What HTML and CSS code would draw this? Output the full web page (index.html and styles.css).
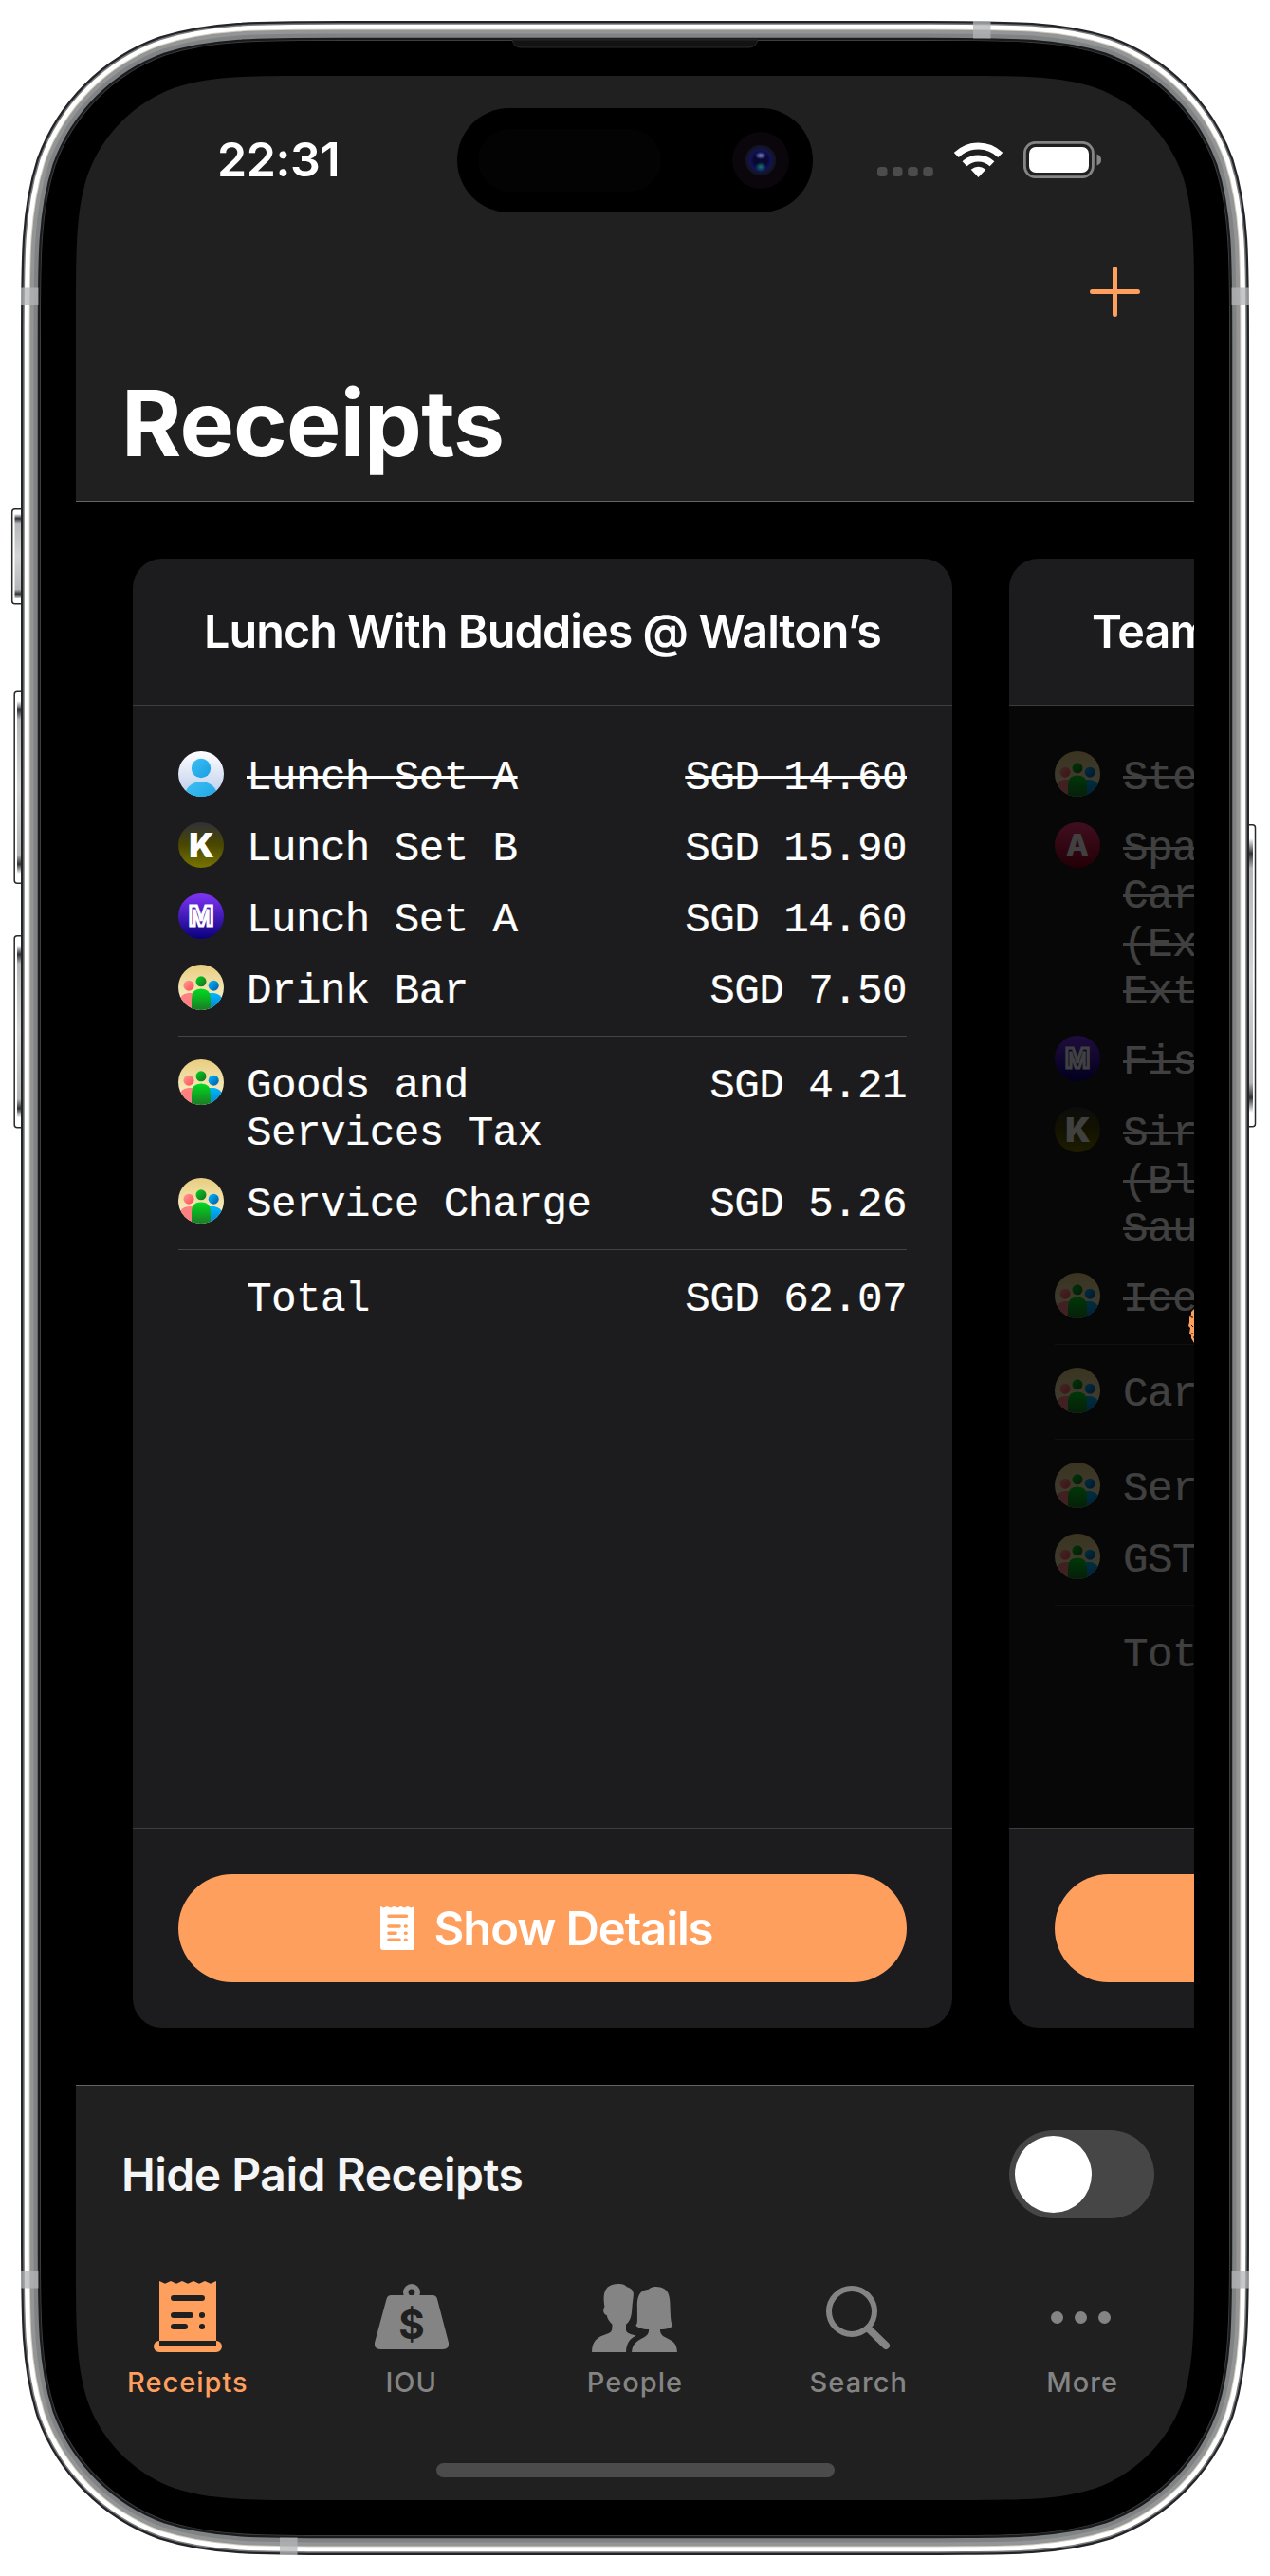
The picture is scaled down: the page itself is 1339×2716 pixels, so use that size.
FILE: index.html
```html
<!DOCTYPE html>
<html lang="en">
<head>
<meta charset="utf-8">
<title>Receipts</title>
<link rel="stylesheet" href="styles.css">
</head>
<body>
<svg class="defs" width="0" height="0" aria-hidden="true">
  <defs>
    <linearGradient id="g-white" x2="0" y2="1"><stop stop-color="#fff"/><stop offset="1" stop-color="#b9cbeb"/></linearGradient>
    <linearGradient id="g-sky" x2="1" y2="1"><stop stop-color="#3cc0f2"/><stop offset="1" stop-color="#189ee4"/></linearGradient>
    <linearGradient id="g-sand" x2="0" y2="1"><stop stop-color="#e8cd80"/><stop offset="1" stop-color="#fdf8d6"/></linearGradient>
    <linearGradient id="g-pink" x2="1" y2="1"><stop stop-color="#ff9c9c"/><stop offset="1" stop-color="#ff4d4d"/></linearGradient>
    <linearGradient id="g-green" x2="1" y2="1"><stop stop-color="#00d420"/><stop offset="1" stop-color="#1b6a20"/></linearGradient>
    <linearGradient id="g-green-body" x2="0" y2="1"><stop stop-color="#00dc20"/><stop offset="1" stop-color="#1c7a26"/></linearGradient>
    <linearGradient id="g-blue" x2="1" y2="1"><stop stop-color="#00bcff"/><stop offset="1" stop-color="#0058a8"/></linearGradient>
    <linearGradient id="g-blue-body" x2="0" y2="1"><stop stop-color="#00b8fc"/><stop offset="1" stop-color="#0080d0"/></linearGradient>
    <clipPath id="round"><circle cx="24" cy="24" r="24"/></clipPath>
  </defs>
  <symbol id="person" viewBox="0 0 48 48">
    <g clip-path="url(#round)"><rect width="48" height="48" fill="url(#g-white)"/>
    <circle cx="24" cy="18" r="10.2" fill="url(#g-sky)"/><ellipse cx="24" cy="48" rx="17.5" ry="16" fill="url(#g-sky)"/></g>
  </symbol>
  <symbol id="group" viewBox="0 0 48 48">
    <g clip-path="url(#round)"><rect width="48" height="48" fill="url(#g-sand)"/>
    <circle cx="11" cy="22.200" r="5.500" fill="url(#g-pink)"/><circle cx="37.200" cy="22.200" r="5.500" fill="url(#g-blue)"/><circle cx="24" cy="17.800" r="5.500" fill="url(#g-green)"/>
    <path d="M1 48V40Q2 30 11 30H16V48Z" fill="#ff8080"/><path d="M32 48V30H38Q45 31 47 38V48Z" fill="url(#g-blue-body)"/>
    <path d="M14 48V36Q14 25.600 24 25.600T34 36V48Z" fill="url(#g-green-body)"/></g>
  </symbol>
</svg>

<div class="phone">
  <svg class="frame" viewBox="0 0 1339 2716" aria-hidden="true">
    <defs>
      <linearGradient id="g-key" x2="0" y2="1"><stop stop-color="#fff"/><stop offset=".04" stop-color="#fff"/><stop offset=".09" stop-color="#303236"/><stop offset=".14" stop-color="#b4b6b8"/><stop offset=".5" stop-color="#d4d5d6"/><stop offset=".86" stop-color="#b4b6b8"/><stop offset=".91" stop-color="#303236"/><stop offset=".96" stop-color="#fff"/><stop offset="1" stop-color="#fff"/></linearGradient>
      <path id="body" d="M361 43H978C1069.600 43 1115.400 43 1164.600 58.600C1218.500 78.200 1260.800 120.500 1280.400 174.400C1296 223.600 1296 269.400 1296 361V2355C1296 2446.600 1296 2492.400 1280.400 2541.600C1260.800 2595.500 1218.500 2637.800 1164.600 2657.400C1115.400 2673 1069.600 2673 978 2673H361C269.400 2673 223.600 2673 174.400 2657.400C120.500 2637.800 78.200 2595.500 58.600 2541.600C43 2492.400 43 2446.600 43 2355V361C43 269.400 43 223.600 58.600 174.400C78.200 120.500 120.500 78.200 174.400 58.600C223.600 43 269.400 43 361 43Z"/>
    </defs>
    <g fill="#fff" stroke="#27292c" stroke-width="1.500">
      <rect x="12.700" y="536.700" width="14" height="100" rx="3"/>
      <rect x="15.200" y="729.200" width="14" height="202" rx="3"/>
      <rect x="15.200" y="986.700" width="14" height="202" rx="3"/>
      <rect x="1310" y="869.700" width="13.500" height="318" rx="3"/>
    </g>
    <g fill="url(#g-key)">
      <rect x="15.500" y="538" width="7" height="97"/>
      <rect x="18" y="731" width="5" height="198"/>
      <rect x="18" y="988.500" width="5" height="198"/>
      <rect x="1316" y="871.500" width="5" height="314"/>
    </g>
    <g fill="none">
      <use href="#body" stroke="#222427" stroke-width="42"/>
      <use href="#body" stroke="#77797b" stroke-width="37.500"/>
      <use href="#body" stroke="#fff" stroke-width="34.500"/>
      <use href="#body" stroke="#d8d3c4" stroke-width="25"/>
      <use href="#body" stroke="#939597" stroke-width="23"/>
      <use href="#body" stroke="#808284" stroke-width="15"/>
      <use href="#body" stroke="#1a1b1d" stroke-width="6.500"/>
      <use href="#body" stroke="#3c3e40" stroke-width="2"/>
    </g>
    <use href="#body" fill="#000"/>
    <g fill="#b4b5b7" fill-opacity=".75">
      <rect x="22" y="303.500" width="18.500" height="18.500"/><rect x="1298.500" y="303.500" width="18.500" height="18.500"/>
      <rect x="22" y="2394" width="18.500" height="18.500"/><rect x="1298.500" y="2394" width="18.500" height="18.500"/>
      <rect x="1026" y="22" width="18.500" height="18.500"/><rect x="295" y="2675.500" width="18.500" height="18.500"/>
    </g>
    <path d="M540 42H799Q797 50 790 50H549Q542 50 540 42Z" fill="#131313" stroke="#2a2a2a"/>
  </svg>

  <main class="screen">
    <header class="header">
      <div class="status">
        <span class="time">22:31</span>
        <svg class="signal" viewBox="0 0 59 10"><g fill="#4c4c4c"><rect width="10.500" height="10" rx="3.500"/><rect x="16" width="10.500" height="10" rx="3.500"/><rect x="32.200" width="10.500" height="10" rx="3.500"/><rect x="48.300" width="10.500" height="10" rx="3.500"/></g></svg>
        <svg class="wifi" viewBox="0 0 51 37"><g fill="none" stroke="#fff" stroke-width="7"><path d="M2.300 13.500A33 33 0 0 1 48.700 13.500"/><path d="M11 22.700A21 21 0 0 1 40 22.700"/></g><path d="M25.500 37L17.700 28.800Q25.500 22.500 33.300 28.800Z" fill="#fff"/></svg>
        <svg class="battery" viewBox="0 0 82 39"><rect x="1.400" y="1.400" width="72" height="36.200" rx="11" fill="none" stroke="#858585" stroke-width="2.800"/><rect x="6" y="6" width="63" height="27" rx="7" fill="#fff"/><path d="M77.500 13.500Q82 15 82 19.500T77.500 25.500Z" fill="#858585"/></svg>
      </div>
      <div class="nav">
        <svg class="plus" viewBox="0 0 53 53"><path d="M2.500 26.500H50.500M26.500 2.500V50.500" stroke="#ff9f5e" stroke-width="5" stroke-linecap="round"/></svg>
      </div>
      <h1 class="title">Receipts</h1>
      <div class="island">
        <span class="sensor"></span>
        <span class="camera"></span>
      </div>
    </header>

    <section class="carousel">
      <article class="card">
        <h2 class="card-title card-title-center">Lunch With Buddies @ Walton’s</h2>
        <div class="items">
          <div class="row paid"><svg class="avatar"><use href="#person"/></svg><span class="name"><span>Lunch Set A</span></span><span class="price">SGD 14.60</span></div>
          <div class="row"><span class="avatar letter letter-k">K</span><span class="name">Lunch Set B</span><span class="price">SGD 15.90</span></div>
          <div class="row"><span class="avatar letter letter-m">M</span><span class="name">Lunch Set A</span><span class="price">SGD 14.60</span></div>
          <div class="row"><svg class="avatar"><use href="#group"/></svg><span class="name">Drink Bar</span><span class="price">SGD 7.50</span></div>
          <hr class="rule">
          <div class="row"><svg class="avatar"><use href="#group"/></svg><span class="name">Goods and<br>Services Tax</span><span class="price">SGD 4.21</span></div>
          <div class="row"><svg class="avatar"><use href="#group"/></svg><span class="name">Service Charge</span><span class="price">SGD 5.26</span></div>
          <hr class="rule">
          <div class="row"><span class="avatar"></span><span class="name">Total</span><span class="price">SGD 62.07</span></div>
        </div>
        <footer class="card-footer">
          <button class="details">
            <svg class="details-icon" viewBox="0 0 36 46"><path fill="#fff" fill-rule="evenodd" d="M0 0L3.600 1.500 7.200 0 10.800 1.500 14.400 0 18 1.500 21.600 0 25.200 1.500 28.800 0 32.400 1.500 36 0V43Q36 46 33 46H3Q0 46 0 43Z"/><g stroke="#ff9f5e" stroke-width="3.600" stroke-linecap="round"><path d="M9 10.300H27.500M9 21H20M9 28.300H16M9 35.300H20M26.500 21h.6M26.500 28.300h.6M26.500 35.300h.6"/></g></svg>
            <span>Show Details</span>
          </button>
        </footer>
      </article>

      <article class="card">
        <h2 class="card-title">Team</h2>
        <div class="items settled">
          <div class="row paid"><svg class="avatar"><use href="#group"/></svg><span class="name"><span>Ste</span></span></div>
          <div class="row paid"><span class="avatar letter letter-a">A</span><span class="name"><span>Spa<br>Car<br>(Ex<br>Ext</span></span></div>
          <div class="row paid"><span class="avatar letter letter-m">M</span><span class="name"><span>Fis</span></span></div>
          <div class="row paid"><span class="avatar letter letter-k">K</span><span class="name"><span>Sir<br>(Bl<br>Sau</span></span></div>
          <div class="row paid"><svg class="avatar"><use href="#group"/></svg><span class="name"><span>Ice</span></span></div>
          <hr class="rule">
          <div class="row"><svg class="avatar"><use href="#group"/></svg><span class="name">Car</span></div>
          <hr class="rule">
          <div class="row"><svg class="avatar"><use href="#group"/></svg><span class="name">Ser</span></div>
          <div class="row"><svg class="avatar"><use href="#group"/></svg><span class="name">GST</span></div>
          <hr class="rule">
          <div class="row"><span class="avatar"></span><span class="name">Tot</span></div>
        </div>
        <footer class="card-footer"><span class="details"></span></footer>
        <svg class="stamp" viewBox="0 0 6 36"><path d="M6 0L3 3V6L1 9V14L0 18L2 20L1 26L3 28V31L6 36Z" fill="#ff9f5e"/><path d="M2 8h2v2M3 17l2 2M4 25v2M5 30h1" fill="none" stroke="#070708" stroke-width="1"/></svg>
      </article>
    </section>

    <footer class="bottom">
      <div class="filter">
        <span class="filter-label">Hide Paid Receipts</span>
        <span class="toggle"><span class="knob"></span></span>
      </div>
      <nav class="tabs">
        <a class="tab active">
          <svg class="tab-icon" viewBox="0 0 100 80" fill="currentColor"><path fill-rule="evenodd" d="M20 2L26 4.800 32 2 38 4.800 44 2 50 4.800 56 2 62 4.800 68 2 74 4.800 80 2V65A6 6 0 0 1 80 77H20A6 6 0 0 1 20 65ZM20 65V71H80V65Z"/><path d="M35 20H65M35 38H53M35 50H47M64.900 38h.2M64.900 50h.2" stroke="#202020" stroke-width="6" stroke-linecap="round"/></svg>
          <span>Receipts</span>
        </a>
        <a class="tab">
          <svg class="tab-icon" viewBox="0 0 100 80" fill="currentColor"><path d="M28.500 17H72Q76 17 77 21L89 67Q90 74 83 74H17Q10 74 11 67L23.500 21Q24.500 17 28.500 17Z"/><circle cx="50" cy="14" r="6.200" fill="none" stroke="currentColor" stroke-width="5.600"/><text class="dollar" x="50" y="62.800" text-anchor="middle">$</text></svg>
          <span>IOU</span>
        </a>
        <a class="tab">
          <svg class="tab-icon" viewBox="1251.850 39 261.300 240" preserveAspectRatio="none" fill="currentColor"><path d="M1265 270C1265 235 1280 222 1305 213C1320 207 1321 203 1321 182C1312 172 1308 165 1306 153C1298 150 1296 142 1297 134L1300 125C1296 95 1294 55 1337 54C1352 54 1358 58 1361 64C1375 68 1382 78 1379 95C1377 110 1376 125 1375 140C1373 160 1370 172 1359 182V200C1360 210 1372 213 1387 217C1370 228 1360 240 1359 270Z"/><path d="M1375 270C1376 245 1388 236 1404 226C1416 218 1422 214 1422 198C1403 197 1392 193 1386 185C1392 180 1390 165 1390 130C1389 95 1395 74 1421 71C1428 64 1435 62 1442 63C1478 65 1481 90 1481 140C1482 165 1483 180 1488 186C1482 194 1470 198 1453 198C1453 216 1462 220 1474 227C1492 237 1499 245 1500 270Z"/></svg>
          <span>People</span>
        </a>
        <a class="tab">
          <svg class="tab-icon" viewBox="0 0 100 80" fill="none" stroke="currentColor"><circle cx="43" cy="34" r="24" stroke-width="6"/><path d="M61 52.500L79 70" stroke-width="8" stroke-linecap="round"/></svg>
          <span>Search</span>
        </a>
        <a class="tab">
          <svg class="tab-icon" viewBox="0 0 100 80" fill="currentColor"><circle cx="23.500" cy="40.500" r="6.500"/><circle cx="48.500" cy="40.500" r="6.500"/><circle cx="73.500" cy="40.500" r="6.500"/></svg>
          <span>More</span>
        </a>
      </nav>
      <div class="home"></div>
    </footer>
  </main>
</div>
</body>
</html>
```
FILE: styles.css
```css
* { box-sizing: border-box; }
body { margin: 0; background: #fff; color: #fff; font-family: Inter, sans-serif; }
h1, h2 { margin: 0; }
svg { display: block; flex: none; }
.defs { position: absolute; }

.phone { position: relative; width: 1339px; height: 2716px; padding: 80px; }
.frame { position: absolute; inset: 0; width: 1339px; height: 2716px; }

.screen {
  position: relative;
  display: flex;
  flex-direction: column;
  width: 1179px;
  height: 2556px;
  background: #000;
  clip-path: path("M252.2 0H926.8C999.4 0 1035.7 0 1074.8 12.4C1117.5 27.9 1151.1 61.5 1166.6 104.2C1179 143.3 1179 179.6 1179 252.2V2303.8C1179 2376.4 1179 2412.7 1166.6 2451.8C1151.1 2494.5 1117.5 2528.1 1074.8 2543.6C1035.7 2556 999.4 2556 926.8 2556H252.2C179.6 2556 143.3 2556 104.2 2543.6C61.5 2528.1 27.9 2494.5 12.4 2451.8C0 2412.7 0 2376.4 0 2303.8V252.2C0 179.6 0 143.3 12.4 104.2C27.9 61.5 61.5 27.9 104.2 12.4C143.3 0 179.6 0 252.2 0Z");
}

.header { position: relative; flex: none; height: 449px; background: #202020; border-bottom: 1px solid #646464; }
.status { display: flex; align-items: center; height: 176px; padding: 0 98px 0 149px; }
.time { flex: 1; font-size: 50px; font-weight: 600; letter-spacing: -.4px; }
.signal { width: 59px; height: 10px; margin: 26px 22px 0 0; }
.wifi { width: 51px; height: 37px; margin-right: 22px; }
.battery { width: 82px; height: 39px; }

.island {
  position: absolute;
  top: 34px;
  left: 402px;
  display: flex;
  align-items: center;
  justify-content: space-between;
  width: 375px;
  height: 110px;
  padding: 0 25px 0 22px;
  border-radius: 55px;
  background: #000;
}
.sensor { width: 193px; height: 66px; border-radius: 33px; background: #030303; }
.camera {
  width: 60px;
  height: 60px;
  border-radius: 50%;
  background:
    radial-gradient(ellipse 6px 4px at 30px 25px, #7884d8, transparent),
    radial-gradient(ellipse 6px 5px at 30px 37px, #127a78, transparent),
    radial-gradient(circle at 30px 30px, #080830 7px, #12125c 11px, #14162c 13px, #101122 16px, #0a060b 16.5px);
}

.nav { display: flex; align-items: center; justify-content: flex-end; height: 102px; padding-right: 57px; }
.plus { width: 53px; height: 53px; }
.title { padding: 30px 0 0 48px; font-size: 96.500px; font-weight: 700; line-height: 116px; letter-spacing: -.8px; }

.carousel { display: flex; flex: none; gap: 60px; width: 1179px; height: 1669px; padding: 60px; overflow: hidden; }
.card { position: relative; display: flex; flex: none; flex-direction: column; width: 864px; height: 1549px; border-radius: 31px; overflow: hidden; background: #000; }
.card-title {
  flex: none;
  height: 155px;
  padding: 0 87px;
  border-bottom: 1px solid #3d3d40;
  background: #1c1c1e;
  font-size: 48.500px;
  font-weight: 600;
  line-height: 154px;
  letter-spacing: -.95px;
  white-space: nowrap;
}
.card-title-center { padding: 0; text-align: center; }
.items {
  display: flex;
  flex: 1;
  flex-direction: column;
  gap: 24px;
  padding: 48px;
  background: #1c1c1e;
  font: 400 44.300px/50.330px "Liberation Mono", monospace;
  letter-spacing: -.62px;
  -webkit-text-stroke: .2px;
}
.settled { opacity: .25; }
.row { display: flex; gap: 24px; min-height: 51px; }
.avatar { flex: none; width: 48px; height: 48px; }
.name { flex: 1; margin: 3px 0 -3px; }
.price { margin: 3px 0 -3px; }
.paid .name span, .paid .price { text-decoration: line-through 3px; }
.rule { width: 100%; height: 1px; margin: 0; border: 0; background: #434346; }
.letter { border-radius: 50%; text-align: center; letter-spacing: 0; font: 800 31px/48px Inter, sans-serif; -webkit-text-stroke: 0; }
.letter-k { background: linear-gradient(#303038, #4a4800 50%, #787400); font-weight: 900; font-size: 35px; line-height: 49px; text-indent: 1px; }
.letter-m { background: linear-gradient(#7f35f5, #08007c); color: #4a20b8; font-weight: 700; font-size: 28px; -webkit-text-stroke: 3px #fff; }
.letter-a { background: linear-gradient(#ff3c7d, #8c0018); }

.card-footer { flex: none; height: 211px; padding: 48px; border-top: 1px solid #3d3d40; background: #1c1c1e; }
.details {
  display: flex;
  align-items: center;
  justify-content: center;
  gap: 21px;
  width: 768px;
  height: 114px;
  padding: 0 0 0 8px;
  border: 0;
  border-radius: 57px;
  background: #ff9f5e;
  color: #fff;
  font: 600 49px Inter, sans-serif;
  letter-spacing: -1.1px;
}
.details-icon { width: 36px; height: 46px; }
.stamp { position: absolute; left: 189px; top: 791px; width: 6px; height: 36px; }

.bottom { flex: none; height: 438px; border-top: 1px solid #646464; background: #202020; }
.filter { display: flex; align-items: center; justify-content: space-between; padding: 47px 42px 0 48px; }
.filter-label { color: #f5f5f5; font-size: 48px; font-weight: 600; letter-spacing: -.5px; }
.toggle { width: 153px; height: 93px; padding: 6px; border-radius: 47px; background: #464646; }
.knob { display: block; width: 81px; height: 81px; border-radius: 50%; background: #fff; }
.tabs { display: grid; grid-template-columns: repeat(5, 1fr); margin-top: 64px; }
.tab { display: flex; flex-direction: column; align-items: center; gap: 11px; color: #848484; font-size: 29px; font-weight: 500; line-height: 35px; letter-spacing: 1px; }
.tab.active { color: #ff9f5e; }
.tab-icon { width: 100px; height: 80px; }
.dollar { fill: #202020; font: 700 42px Inter, sans-serif; letter-spacing: 0; }
.home { width: 420px; height: 15px; margin: 68px auto 0; border-radius: 8px; background: #4b4b4b; }
```
